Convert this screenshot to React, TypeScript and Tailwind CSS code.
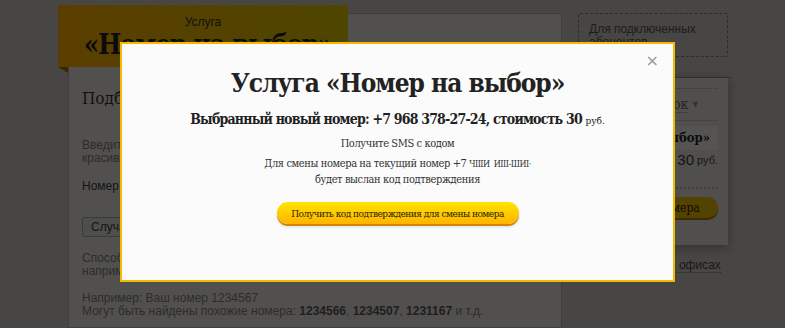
import React from "react";

const serif = "[font-family:DejaVu_Serif_Condensed,DejaVu_Serif,serif] font-stretch-condensed";
const sans = "[font-family:Liberation_Sans,Arial,sans-serif]";

function Pill({ children, className = "" }: { children: React.ReactNode; className?: string }) {
  return <div className={`flex items-center justify-center whitespace-nowrap rounded-full ${serif} ${className}`}>{children}</div>;
}

function DimmedPage() {
  return (
    <div className="flex w-full h-full bg-[#484644] pl-[58px] pt-[13px] gap-[16px]">
      <div className="relative w-[504px] h-full pl-[10px]">
        <div className="absolute left-0 top-[-8px] w-[290px] h-[62px] z-10 bg-[#554000] bg-[linear-gradient(90deg,#5a3e00,#4e4500)] flex flex-col items-center pt-[10px]">
          <div className="text-[12px] leading-[14px] text-[#111111]">Услуга</div>
          <div className={`whitespace-nowrap pl-[10px] text-[27px] leading-[32px] tracking-[-1px] font-bold text-[#0b0b0b] ${serif}`}>«Номер на выбор»</div>
          <div className="absolute left-0 bottom-[-6px] w-0 h-0 border-t-[6px] border-t-[#3d2500] border-l-[10px] border-l-transparent" />
        </div>
        <div className="h-full bg-[#51504e] border border-[#3f3e3c] pl-[13px] pt-[74px] flex flex-col">
          <div className={`text-[17px] leading-[20px] text-[#111111] ${serif}`}>Подберите номер</div>
          <div className="mt-[31px] text-[12px] leading-[13px] text-[#2d2c2b]">
            <div>Введите желаемую комбинацию цифр, и мы подберём</div>
            <div>красивый номер из свободных</div>
          </div>
          <div className="mt-[15px] text-[12px] leading-[13px] text-[#141414]">Номер телефона</div>
          <div className="mt-[24px] w-[150px] h-[20px] rounded-[3px] border border-[#3a3a39] bg-[#4e4e4d] text-[12px] text-[#151515] flex items-center pl-[8px]">
            Случайный номер
          </div>
          <div className="mt-[15px] text-[12px] leading-[13px] text-[#2d2c2b]">
            <div>Способ подбора номера: по совпадению цифр,</div>
            <div>например, последних цифр Вашего номера</div>
          </div>
          <div className="mt-[14px] text-[12px] leading-[13px] text-[#2d2c2b]">
            <div>Например: Ваш номер 1234567</div>
            <div>
              Могут быть найдены похожие номера: <b className="text-[#1e1e1e]">1234566</b>, <b className="text-[#1e1e1e]">1234507</b>,{" "}
              <b className="text-[#1e1e1e]">1231167</b> и т.д.
            </div>
          </div>
        </div>
      </div>
      <div className="w-[154px] flex flex-col">
        <div className="w-[150px] h-[44px] border border-dashed border-[#2c2c2b] rounded-[2px] pl-[10px] pt-[9px] text-[12px] leading-[13px] text-[#1c1c1c]">
          <div>Для подключенных</div>
          <div>абонентов</div>
        </div>
        <div className="mt-[20px] w-[154px] border-t border-[#343433]">
          <div className="w-[150px] h-[167px] bg-[#504f4d] shadow-[0_2px_10px_rgba(0,0,0,0.3)] px-[10px] pt-[10px]">
            <div className="border-t border-dotted border-[#393938]" />
            <div className={`h-[31px] flex items-center justify-end pr-[20px] text-[14px] text-[#262626] ${serif}`}>
              <span className="border-b border-dotted border-[#333333] leading-[16px]">Список</span>
              <span className="ml-[4px] text-[8px] text-[#333333]">▼</span>
            </div>
            <div className="border-t border-dotted border-[#393938]" />
            <div className={`mt-[5px] h-[24px] bg-[#555453] flex items-center justify-end pr-[8px] text-[13px] font-bold text-[#0c0c0c] whitespace-nowrap ${serif}`}>
              «Номер на выбор»
            </div>
            <div className="h-[20px] flex items-center justify-end text-[15px] text-[#141414]">
              30<span className="ml-[3px] text-[11px]">руб.</span>
            </div>
            <div className="mt-[17px] border-t-2 border-dotted border-[#3d3d3c]" />
            <Pill className="mt-[8px] h-[21px] text-[12px] bg-[#534300] shadow-[0_2px_0_#3f2900] text-[#0c0900]">Выбрать номера</Pill>
          </div>
          <div className="mt-[11px] pl-[20px] text-[12px] text-[#181818]">
            <span className="border-b border-dotted border-[#2a2a2a] leading-[14px]">Подключить в офисах</span>
          </div>
        </div>
      </div>
    </div>
  );
}

export default function App() {
  return (
    <div className={`relative w-[785px] h-[328px] overflow-hidden bg-[#484644] ${sans}`}>
      <DimmedPage />
      <div className="absolute z-30 left-[120px] top-[42px] w-[555px] h-[240px] border-2 border-[#f7b900] bg-[#fbfbfb] flex flex-col items-center pt-[23px] text-[#222222]">
        <div className="absolute right-[14px] top-[9px] text-[16px] leading-[16px] text-[#999999] [font-family:DejaVu_Sans,sans-serif]">×</div>
        <div className={`whitespace-nowrap text-[26px] leading-[32px] tracking-[-1px] font-bold text-[#222222] ${serif}`}>Услуга «Номер на выбор»</div>
        <div className={`whitespace-nowrap mt-[11px] text-[14px] leading-[18px] tracking-[-0.8px] font-bold text-[#222222] ${serif}`}>
          Выбранный новый номер: +7 968 378-27-24, стоимость 30 <span className="text-[10px] font-normal tracking-normal">руб.</span>
        </div>
        <div className={`mt-[6px] text-[11px] leading-[16px] tracking-[-0.4px] text-[#333333] ${serif}`}>Получите SMS с кодом</div>
        <div className={`mt-[4px] text-[11px] leading-[16px] tracking-[-0.4px] text-[#333333] text-center ${serif}`}>
          <div>
            Для смены номера на текущий номер +7 <span className="text-[9px] tracking-[-0.5px]">ЧIIIИ&nbsp; ИIII-ШИI·</span>
          </div>
          <div>будет выслан код подтверждения</div>
        </div>
        <Pill className="mt-[14px] w-[242px] h-[22px] text-[10px] tracking-[-0.5px] bg-[linear-gradient(#ffe400,#ffb300)] shadow-[0_2px_0_#d08600,0_3px_3px_rgba(0,0,0,0.12)] text-[#2a1e00]">
          Получить код подтверждения для смены номера
        </Pill>
      </div>
    </div>
  );
}
